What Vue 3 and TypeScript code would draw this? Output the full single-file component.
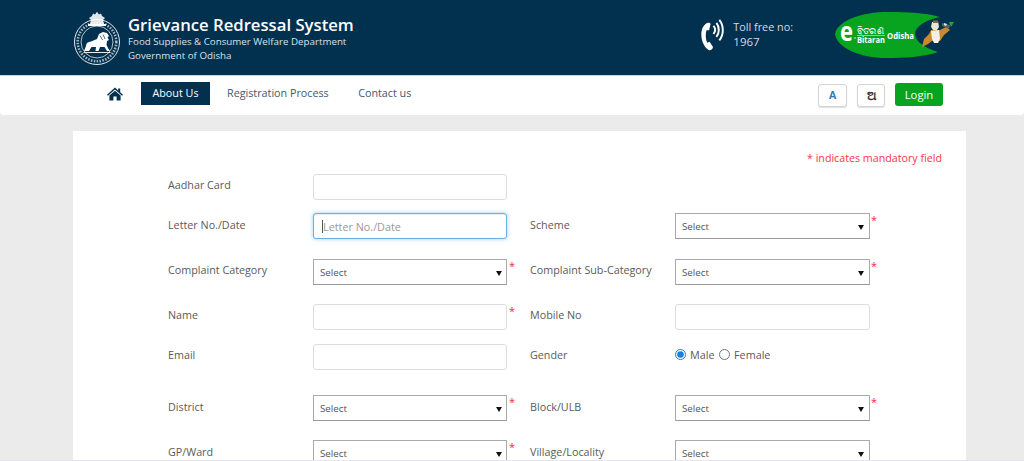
<template>
  <div class="page">
    <header class="top">
      <svg class="emblem" viewBox="0 0 50 54" aria-hidden="true">
        <path d="M18 13 L19 9 L17 7 L20 5 L21 2.500 L23 3.500 L25 .8 L27 3.500 L29 2.500 L30 5 L33 7 L31 9 L32 13 Z" fill="#dfe6ea" />
        <path d="M16 13 H34 V15 H16 Z" fill="#fff" />
        <circle cx="25" cy="31" r="22.500" fill="none" stroke="#fff" stroke-width="0.900" />
        <circle cx="25" cy="31" r="19.300" fill="none" stroke="#fff" stroke-width="2.600" stroke-dasharray="1.500 1.400" opacity="0.65" />
        <circle cx="25" cy="31" r="16" fill="#02304f" stroke="#fff" stroke-width="0.700" />
        <path
          d="M12 40 L14 35 C14 32 16 31 19 30.500 L25 28 L27 23 L31 21 L35 22 L37 25 L35.500 26.500 L37 29 L35 30 L34.500 34 L36.500 38 L38 40 H35 L32.500 36 L28 36 L26.500 40 H23.500 L24 36 L19.500 36 L17 40 Z"
          fill="#fff"
        />
        <path d="M28 24.500 L30.500 29 M31 23.500 L33 28" stroke="#02304f" stroke-width="0.700" />
        <path d="M11.500 41.500 H38.500" stroke="#fff" stroke-width="0.900" />
      </svg>
      <div class="brand">
        <div class="brand-title">Grievance Redressal System</div>
        <div class="brand-line">Food Supplies &amp; Consumer Welfare Department</div>
        <div class="brand-line">Government of Odisha</div>
      </div>
      <div class="toll">
        <svg class="phone" viewBox="0 0 26 34" aria-hidden="true">
          <path
            d="M7.500 5 C3 7 .8 12 1 18 C1.200 24 4 30 8.500 33 C10 33.500 11.500 33 12.500 31.500 L13 30 L9.500 24.500 L7 25.500 C5.500 22 5 16 6.300 12.500 L9 12.500 L10.500 6 C10 4.800 8.800 4.500 7.500 5 Z"
            fill="#fff"
          />
          <path d="M13.500 8 C15.500 10.500 15.500 14 13.500 16.500" fill="none" stroke="#fff" stroke-width="2" />
          <path d="M16.500 5 C19.800 9 19.800 15.500 16.500 19.500" fill="none" stroke="#fff" stroke-width="2" />
          <path d="M19.500 2 C24.300 8 24.300 17 19.500 23" fill="none" stroke="#fff" stroke-width="2" />
        </svg>
        <div class="toll-text">
          <div>Toll free no:</div>
          <div class="toll-num">1967</div>
        </div>
      </div>
      <svg class="logo" viewBox="0 0 124 50">
        <path d="M3 24 C6 10 30 2 56 2 C76 2 96 3 108 7 C94 10 83 16 83 24 C83 32 94 38 106 42 C92 47 72 48 54 48 C28 48 5 38 3 24 Z" fill="#08a31f" />
        <text x="8" y="31" class="logo-e" textLength="13" lengthAdjust="spacingAndGlyphs">e</text>
        <path d="M22 28 H24" stroke="#fff" stroke-width="0.800" />
        <text x="25" y="24" class="logo-or" textLength="27" lengthAdjust="spacingAndGlyphs">ବିତରଣ</text>
        <path d="M25 25.500 H53" stroke="#fff" stroke-width="0.500" />
        <text x="25" y="32.500" class="logo-small" textLength="28" lengthAdjust="spacingAndGlyphs">Bitaran</text>
        <text x="55" y="29" class="logo-small" textLength="27" lengthAdjust="spacingAndGlyphs">Odisha</text>
        <path d="M90 37 L92 29 L97 24 L99 20 L108 20 L114 17 L118 20 L112 25 L108 31 L100 31 L96 34 Z" fill="#c98a2e" />
        <path d="M100 12 L106 11 L107 17 L105 20 H101 L99 17 Z" fill="#e9e4d6" />
        <path d="M101 10.500 H106 V13 H101 Z" fill="#7c6a4b" />
        <path d="M99 21 L107 20 L108 29 L106 33 H102 L100 29 Z" fill="#f3f0e6" />
        <path d="M110 13 L118 15 L117 19 L110 16 Z" fill="#59665c" />
        <path d="M112 13 L115 14 L114 16 L112 15 Z" fill="#e9e4d6" />
        <path d="M117 12 L122 12 L119 17 Z" fill="#20a537" />
      </svg>
    </header>

    <nav class="nav">
      <svg class="home" viewBox="0 0 20 17" aria-hidden="true">
        <path d="M10 .500 L14 4 V1.500 H16.500 V6.200 L20 9.500 L18.800 10.800 L10 3 L1.200 10.800 L0 9.500 Z" fill="#02304f" />
        <path d="M10 4.500 L17 10.500 V16.500 H12 V11.500 H8 V16.500 H3 V10.500 Z" fill="#02304f" />
      </svg>
      <a class="nav-link active">About Us</a>
      <a class="nav-link">Registration Process</a>
      <a class="nav-link">Contact us</a>
      <div class="nav-tools">
        <button class="lang lang-en">A</button>
        <button class="lang lang-or">ଅ</button>
        <button class="login">Login</button>
      </div>
    </nav>

    <main class="card">
      <p class="note">* indicates mandatory field</p>
      <form class="form" @submit.prevent>
        <div v-for="row in rows" :key="row.left.label" class="row" :class="row.size">
          <template v-for="cell in [row.left, row.right]" :key="cell?.label">
            <template v-if="cell">
              <label class="label">{{ cell.label }}</label>
              <div class="field">
                <div v-if="cell.kind === 'gender'" class="radios">
                  <label class="radio"><input type="radio" name="gender" checked />Male</label>
                  <label class="radio"><input type="radio" name="gender" />Female</label>
                </div>
                <select v-else-if="cell.kind === 'select'" class="select">
                  <option>Select</option>
                </select>
                <input
                  v-else
                  :ref="cell.focus ? setFocus : undefined"
                  class="input"
                  :placeholder="cell.placeholder"
                />
                <span v-if="cell.focus" class="caret"></span>
                <span v-if="cell.required" class="star">*</span>
              </div>
            </template>
          </template>
        </div>
      </form>
    </main>
  </div>
</template>

<script setup lang="ts">
import { nextTick, onMounted } from "vue";

interface Cell {
  label: string;
  kind: "input" | "select" | "gender";
  required?: boolean;
  placeholder?: string;
  focus?: boolean;
}

interface Row {
  left: Cell;
  right?: Cell;
  size: string;
}

const rows: Row[] = [
  { left: { label: "Aadhar Card", kind: "input" }, size: "h39" },
  {
    left: { label: "Letter No./Date", kind: "input", placeholder: "Letter No./Date", focus: true },
    right: { label: "Scheme", kind: "select", required: true },
    size: "h46 low",
  },
  {
    left: { label: "Complaint Category", kind: "select", required: true },
    right: { label: "Complaint Sub-Category", kind: "select", required: true },
    size: "h45",
  },
  {
    left: { label: "Name", kind: "input", required: true },
    right: { label: "Mobile No", kind: "input" },
    size: "h40",
  },
  {
    left: { label: "Email", kind: "input" },
    right: { label: "Gender", kind: "gender" },
    size: "h51",
  },
  {
    left: { label: "District", kind: "select", required: true },
    right: { label: "Block/ULB", kind: "select", required: true },
    size: "h45 low",
  },
  {
    left: { label: "GP/Ward", kind: "select", required: true },
    right: { label: "Village/Locality", kind: "select" },
    size: "h45 low",
  },
];

let focusTarget: HTMLInputElement | null = null;

const setFocus = (el: unknown) => {
  if (el) focusTarget = el as HTMLInputElement;
};

onMounted(async () => {
  await nextTick();
  focusTarget?.focus();
});
</script>

<style scoped>
.page {
  height: 460px;
  overflow: hidden;
  background: #ebebeb;
  font-family: "Open Sans", "Noto Sans", sans-serif;
  color: #555;
}

.top {
  height: 76px;
  box-sizing: border-box;
  background: #02304f;
  border-bottom: 1px solid #c9d3da;
  display: flex;
  align-items: flex-start;
  padding-left: 72px;
  padding-right: 68px;
  color: #fff;
}

.emblem {
  width: 50px;
  height: 54px;
  margin-top: 11px;
  flex: none;
}

.brand {
  margin-left: 6px;
  margin-top: 14px;
}

.brand-title {
  font-size: 16.700px;
  font-weight: 600;
  line-height: 21px;
}

.brand-line {
  font-size: 9.750px;
  font-weight: 500;
  line-height: 13.500px;
  color: #d9e2e8;
}

.toll {
  display: flex;
  margin-left: auto;
  margin-top: 17px;
  flex: none;
}

.phone {
  width: 26px;
  height: 33px;
  margin-top: 1px;
}

.toll-text {
  margin-left: 7px;
  margin-top: 2px;
  font-size: 10.800px;
  line-height: 15px;
  color: #d3dde4;
}

.toll-num {
  font-size: 11.500px;
  line-height: 16px;
}

.logo {
  width: 124px;
  height: 50px;
  margin-left: 39px;
  margin-top: 10px;
  flex: none;
}

.logo-e {
  font-size: 26px;
  font-weight: 700;
  fill: #fff;
}

.logo-or {
  font-size: 9px;
  font-weight: 400;
  fill: #fff;
}

.logo-small {
  font-size: 9.500px;
  font-weight: 700;
  fill: #fff;
}

.nav {
  height: 39px;
  box-sizing: border-box;
  background: #fff;
  border-radius: 0 0 4px 4px;
  display: flex;
  align-items: center;
  padding: 0 81px 4px 107px;
  font-size: 10.750px;
}

.home {
  width: 16px;
  height: 14px;
  margin-top: 1px;
  margin-right: 18px;
  flex: none;
}

.nav-link {
  padding: 0 11px;
  height: 23px;
  line-height: 23px;
  color: #44586a;
  margin-right: 7.500px;
}

.nav-link.active {
  background: #02304f;
  color: #fff;
  width: 69px;
  box-sizing: border-box;
  text-align: center;
  padding: 0;
  margin-right: 6px;
}

.nav-tools {
  margin-left: auto;
  margin-top: 2px;
  display: flex;
  align-items: center;
  gap: 10px;
}

.lang {
  width: 29px;
  height: 23px;
  margin-top: 1px;
  background: #fff;
  border: 1px solid #d4d4d4;
  border-radius: 3px;
  box-shadow: 0 1px 1px rgba(0, 0, 0, 0.12);
  padding: 0;
  font-family: inherit;
  font-size: 10.500px;
  font-weight: 700;
}

.lang-en {
  color: #337ab7;
}

.lang-or {
  width: 28px;
  color: #333;
  font-size: 12px;
}

.login {
  width: 48px;
  height: 23px;
  border: none;
  border-radius: 3px;
  background: #08a31f;
  color: #fff;
  font-family: inherit;
  font-size: 11.300px;
  padding: 0;
}

.card {
  margin: 16px 58px 0 73px;
  background: #fff;
  height: 400px;
  padding: 0 24px 0 95px;
}

.note {
  margin: 0;
  padding-top: 20px;
  height: 43px;
  box-sizing: border-box;
  text-align: right;
  font-size: 10.700px;
  line-height: 14px;
  color: #f9344a;
}

.form {
  display: flex;
  flex-direction: column;
}

.row {
  display: grid;
  grid-template-columns: 145px 217px 145px 195px;
  align-items: start;
  flex: none;
}

.h39 { height: 39px; }
.h40 { height: 40px; }
.h45 { height: 45px; }
.h46 { height: 46px; }
.h51 { height: 51px; }

.label {
  font-size: 10.750px;
  line-height: 15px;
  margin-top: 4px;
  color: #5a5a5a;
}

.low .label {
  margin-top: 5px;
}

.field {
  position: relative;
  width: 195px;
}

.field:nth-child(2) {
  width: 194px;
}

.input,
.select {
  display: block;
  width: 100%;
  height: 26px;
  box-sizing: border-box;
  font-family: inherit;
  color: #555;
  background: #fff;
}

.input {
  border: 1px solid #ddd;
  border-radius: 3px;
  padding: 0 9px;
  font-size: 10.800px;
  outline: none;
  caret-color: transparent;
}

.input::placeholder {
  color: #999;
}

.input:focus {
  border-color: #66afe9;
  box-shadow: inset 0 1px 1px rgba(0, 0, 0, 0.075), 0 0 4px rgba(102, 175, 233, 0.6);
}

.caret {
  position: absolute;
  left: 9px;
  top: 7px;
  width: 1px;
  height: 13px;
  background: #555;
}

.select {
  appearance: none;
  border: 1px solid #aaa;
  border-bottom-color: #999;
  border-radius: 0;
  padding: 1px 6px 0;
  font-size: 9.800px;
  background-image: url("data:image/svg+xml,%3Csvg xmlns='http://www.w3.org/2000/svg' width='6' height='5'%3E%3Cpath d='M0 0H6L3 5Z' fill='%23111'/%3E%3C/svg%3E");
  background-position: 182px 11px;
  background-repeat: no-repeat;
}

.star {
  position: absolute;
  left: 196px;
  top: -1px;
  color: #f8283c;
  font-size: 11px;
  line-height: 16px;
}

.radios {
  display: flex;
  align-items: center;
  height: 20px;
  gap: 4.500px;
}

.radio {
  display: flex;
  align-items: center;
  font-size: 10.800px;
  color: #5a5a5a;
}

.radio input {
  width: 11px;
  height: 11px;
  margin: 0 4px 0 0;
  accent-color: #1a7fe0;
}
</style>

<style>
html,
body {
  margin: 0;
  overflow: hidden;
  background: #e4e4ea;
}
</style>
